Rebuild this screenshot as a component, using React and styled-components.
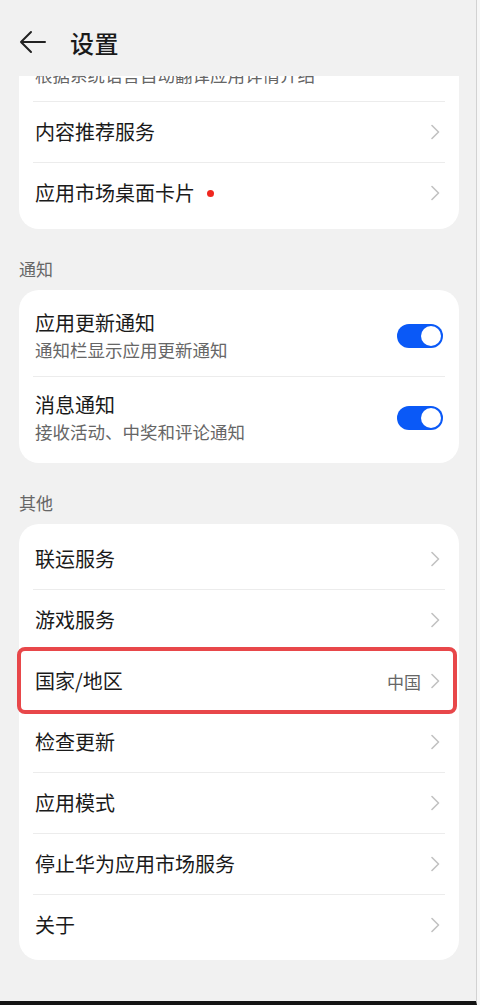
import React from "react";
import styled, { createGlobalStyle } from "styled-components";

const GlobalStyle = createGlobalStyle`
  html, body {
    margin: 0;
    padding: 0;
    background: #f7f7f7;
  }
  body {
    font-family: "Noto Sans CJK SC", "Noto Sans", sans-serif;
    -webkit-font-smoothing: antialiased;
  }
`;

const Screen = styled.div`
  width: 476px;
  height: 1001px;
  background: #f1f1f1;
  border-right: 1px solid #d2d2d2;
  border-bottom: 4px solid #141414;
  overflow: hidden;
  display: flex;
  flex-direction: column;
`;

const Header = styled.header`
  height: 76px;
  flex-shrink: 0;
  display: flex;
  align-items: center;
  padding: 8px 0 0 19px;
  box-sizing: border-box;
  gap: 23px;
`;

const BackButton = styled.button`
  border: 0;
  background: transparent;
  padding: 0;
  width: 28px;
  height: 28px;
  display: flex;
  align-items: center;
  justify-content: center;
`;

const Title = styled.h1`
  margin: 0;
  font-size: 24px;
  font-weight: 500;
  color: #1a1a1a;
  letter-spacing: 0.5px;
`;

const Content = styled.main`
  padding: 0 17px 0 19px;
`;

const Card = styled.section`
  background: #ffffff;
  border-radius: ${(p) => (p.$clipped ? "0 0 20px 20px" : "20px")};
  padding: ${(p) => (p.$clipped ? "0 0 6px" : "5px 0")};
`;

const ClippedText = styled.div`
  height: 25px;
  overflow: hidden;
  display: flex;
  align-items: flex-end;
  padding: 0 16px;
  font-size: 17.5px;
  line-height: 24px;
  color: #666;
  white-space: nowrap;

  span {
    display: block;
    margin-bottom: 14px;
  }
`;

const Divider = styled.div`
  height: 1px;
  background: #ececec;
  margin: 0 14px;
`;

const Row = styled.div`
  position: relative;
  display: flex;
  align-items: center;
  min-height: ${(p) => (p.$tall ? "81px" : "60px")};
  padding: 0 16px;
  box-sizing: border-box;

  ${(p) =>
    p.$highlight &&
    `
    &::after {
      content: "";
      position: absolute;
      left: -2px;
      right: 2px;
      top: -4px;
      bottom: -3px;
      border: 4px solid #e8474a;
      border-radius: 8px;
      pointer-events: none;
    }
  `}
`;

const TextBlock = styled.div`
  flex: 1;
  display: flex;
  flex-direction: column;
  gap: 2px;
`;

const ItemTitle = styled.span`
  font-size: 20px;
  line-height: 26px;
  color: #1a1a1a;
  display: flex;
  align-items: center;
`;

const ItemSub = styled.span`
  font-size: 17.5px;
  line-height: 24px;
  color: #666;
`;

const Dot = styled.i`
  width: 7px;
  height: 7px;
  border-radius: 50%;
  background: #f0271f;
  margin-left: 12px;
`;

const Value = styled.span`
  font-size: 17px;
  color: #666;
  margin-right: 10px;
`;

const ChevronWrap = styled.span`
  display: flex;
  margin-right: 3px;
`;

const SectionLabel = styled.h2`
  margin: 0;
  padding: 28px 0 9px;
  font-size: 17px;
  line-height: 24px;
  font-weight: 400;
  color: #666;
`;

const Toggle = styled.span`
  width: 46px;
  height: 24px;
  border-radius: 12px;
  background: #0a59f7;
  display: flex;
  align-items: center;
  justify-content: ${(p) => (p.$on ? "flex-end" : "flex-start")};
  padding: 0 2px;
  box-sizing: border-box;

  &::before {
    content: "";
    width: 20px;
    height: 20px;
    border-radius: 50%;
    background: #fff;
  }
`;

const BackArrow = () => (
  <svg width="28" height="24" viewBox="0 0 28 24" fill="none">
    <path
      d="M26 12H2M12 2L2 12l10 10"
      stroke="#222"
      strokeWidth="2"
      strokeLinecap="round"
      strokeLinejoin="round"
    />
  </svg>
);

const Chevron = () => (
  <ChevronWrap>
    <svg width="9" height="16" viewBox="0 0 9 16" fill="none">
      <path
        d="M1 1.5L7.5 8 1 14.5"
        stroke="#c2c2c2"
        strokeWidth="1.6"
        strokeLinecap="round"
        strokeLinejoin="round"
      />
    </svg>
  </ChevronWrap>
);

const LinkRow = ({ title, value, dot, highlight }) => (
  <Row $highlight={highlight}>
    <TextBlock>
      <ItemTitle>
        {title}
        {dot && <Dot />}
      </ItemTitle>
    </TextBlock>
    {value && <Value>{value}</Value>}
    <Chevron />
  </Row>
);

const SwitchRow = ({ title, sub }) => (
  <Row $tall>
    <TextBlock>
      <ItemTitle>{title}</ItemTitle>
      <ItemSub>{sub}</ItemSub>
    </TextBlock>
    <Toggle $on />
  </Row>
);

const otherItems = [
  { title: "联运服务" },
  { title: "游戏服务" },
  { title: "国家/地区", value: "中国", highlight: true },
  { title: "检查更新" },
  { title: "应用模式" },
  { title: "停止华为应用市场服务" },
  { title: "关于" },
];

export default function App() {
  return (
    <>
      <GlobalStyle />
      <Screen>
        <Header>
          <BackButton aria-label="返回">
            <BackArrow />
          </BackButton>
          <Title>设置</Title>
        </Header>
        <Content>
          <Card $clipped>
            <ClippedText>
              <span>根据系统语言自动翻译应用详情介绍</span>
            </ClippedText>
            <Divider />
            <LinkRow title="内容推荐服务" />
            <Divider />
            <LinkRow title="应用市场桌面卡片" dot />
          </Card>

          <SectionLabel>通知</SectionLabel>
          <Card>
            <SwitchRow title="应用更新通知" sub="通知栏显示应用更新通知" />
            <Divider />
            <SwitchRow title="消息通知" sub="接收活动、中奖和评论通知" />
          </Card>

          <SectionLabel>其他</SectionLabel>
          <Card>
            {otherItems.map((item, i) => (
              <React.Fragment key={item.title}>
                {i > 0 && <Divider />}
                <LinkRow {...item} />
              </React.Fragment>
            ))}
          </Card>
        </Content>
      </Screen>
    </>
  );
}
